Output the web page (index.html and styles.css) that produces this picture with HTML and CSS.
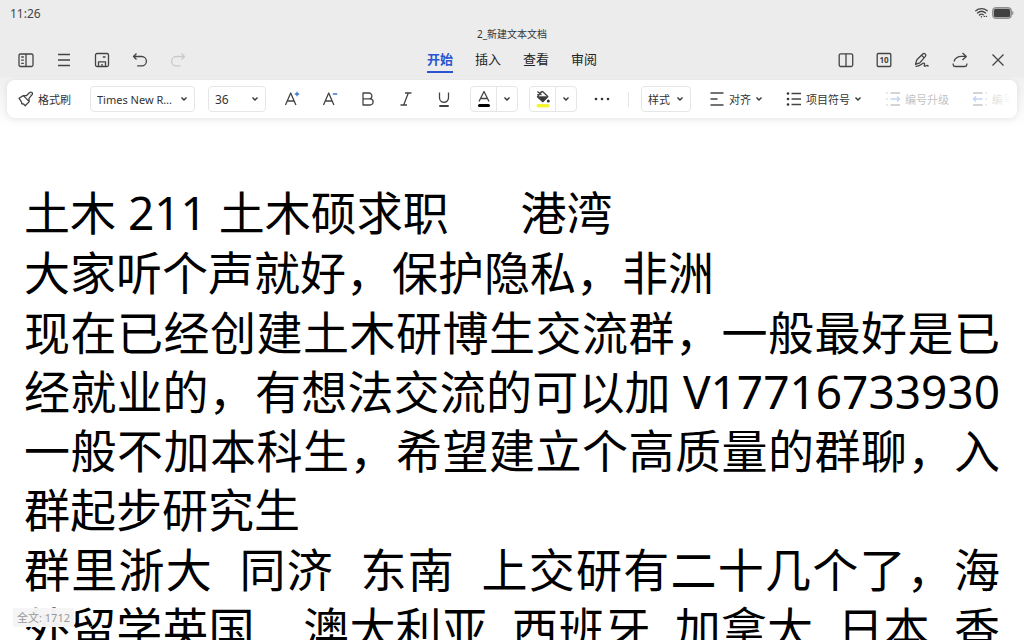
FILE: index.html
```html
<!DOCTYPE html>
<html lang="zh-CN">
<head>
<meta charset="utf-8">
<title>2_新建文本文档</title>
<link rel="stylesheet" href="styles.css">
</head>
<body>
<div class="app">
  <header class="header">
    <div class="status">
      <time>11:26</time>
      <div class="status-icons">
        <svg width="13" height="12" viewBox="0 0 13 12" fill="none" stroke="#444" stroke-width="1.3" stroke-linecap="round"><path d="M.8 3.8C4 .8 9 .8 12.2 3.8M2.5 6C5 3.8 8 3.8 10.5 6M4.4 8C5.6 7 7.2 7 8.2 7.8"/><path d="M6.4 9.6v.3M9.2 9.4h.2M11.3 9.4h.2"/></svg>
        <svg width="22" height="12" viewBox="0 0 22 12"><rect x=".6" y=".6" width="18.8" height="10.8" rx="3" fill="#aaa" stroke="#888"/><rect x="2" y="2" width="16" height="8" rx="1.5" fill="#404040"/><path d="M20.5 4v4c1.2-.5 1.2-3.500 0-4z" fill="#555"/></svg>
      </div>
    </div>
    <h1 class="title">2_新建文本文档</h1>
    <div class="appbar">
      <div class="actions">
        <button class="icon-btn" aria-label="目录"><svg viewBox="0 0 16 16"><rect x="1" y="2" width="14" height="12.500" rx="1.500"/><path d="M8 2v12.500M3.200 5h2.600M3.200 8.200h2.600M3.200 11.400h2.600"/></svg></button>
        <button class="icon-btn" aria-label="菜单"><svg viewBox="0 0 16 16"><path d="M2 2.500h12M2 8h12M2 13.500h12"/></svg></button>
        <button class="icon-btn" aria-label="保存"><svg viewBox="0 0 16 16"><rect x="1.500" y="1.500" width="13" height="13" rx="1.500"/><path d="M4.500 14.500V9.800h7v4.700M8.800 5h2.700M8 12v2.500"/></svg></button>
        <button class="icon-btn" aria-label="撤销"><svg viewBox="0 0 16 16"><path d="M4.500 1.500L1.500 4.500l3 3M1.500 4.500h8.200a4.700 4.700 0 0 1 0 9.400H5.200"/></svg></button>
        <button class="icon-btn" aria-label="重做" disabled><svg viewBox="0 0 16 16"><path d="M11.500 1.500l3 3-3 3M14.500 4.500H6.300a4.700 4.700 0 0 0 0 9.400h4.500"/></svg></button>
      </div>
      <nav class="tabs">
        <a class="tab tab-active" href="#start">开始</a>
        <a class="tab" href="#insert">插入</a>
        <a class="tab" href="#view">查看</a>
        <a class="tab" href="#review">审阅</a>
      </nav>
      <div class="actions actions-end">
        <button class="icon-btn" aria-label="分栏"><svg viewBox="0 0 16 16"><rect x="1.200" y="1.800" width="13.500" height="12.700" rx="1.500"/><path d="M8 1.800v12.700"/></svg></button>
        <button class="icon-btn" aria-label="文档数 10"><svg viewBox="0 0 16 16"><rect x="1.200" y="1.500" width="13.600" height="13" rx="1"/><text class="badge-num" x="8" y="11">10</text></svg></button>
        <button class="icon-btn" aria-label="批注"><svg viewBox="0 0 16 16"><path d="M1.500 12.300l1.400-4.500L8.700 2c1.700-1.500 4 .5 2.700 2.300L5.800 10.800zM7.600 3.300l2.600 2.600M1.500 14.300c5 .3 7-4.100 8.800-3 1.300.8-1 2.500.4 2.900 1.400.3 2.200-2 3.800.1"/></svg></button>
        <button class="icon-btn" aria-label="分享"><svg viewBox="0 0 16 16"><path d="M10.500 1l3.800 3.400-3.800 3.500M14 4.400H9.500C5.500 4.400 3 6.400 2 9.500M1.200 11.500v1.200c0 1 .8 1.800 1.800 1.800h10c1 0 1.800-.8 1.800-1.800v-1.200"/></svg></button>
        <button class="icon-btn" aria-label="关闭"><svg viewBox="0 0 16 16"><path d="M2.500 2.500l11 11M13.500 2.500l-11 11"/></svg></button>
      </div>
    </div>
  </header>

  <div class="toolbar-wrap">
    <div class="toolbar" role="toolbar" aria-label="格式">
      <button class="text-btn"><svg class="ico" viewBox="0 0 16 16"><path d="M1 7.200l4.300-2.600 3 .1 3.400-3.200c1.500-1.200 3.500.5 2.400 2.200L11 7.300l.2 3.300-4 4.200-2-2-1.500 0-.1-1.700zM5.300 4.600l6 6M12.300 3.500l.3.200"/></svg>格式刷</button>
      <label class="select-box font-name"><select aria-label="字体"><option>Times New R…</option></select><svg class="chev" viewBox="0 0 8 6"><path d="M1.500 1.500L4 4l2.500-2.500"/></svg></label>
      <label class="select-box font-size"><select aria-label="字号"><option>36</option></select><svg class="chev" viewBox="0 0 8 6"><path d="M1.500 1.500L4 4l2.500-2.500"/></svg></label>
      <div class="char-tools">
        <button class="char-btn" aria-label="增大字号"><svg class="ico" viewBox="0 0 16 16"><path d="M1.500 14L6.700 2l5.200 12M3.200 10h7"/><path class="blue" d="M13 .8v4.400M10.800 3h4.400"/></svg></button>
        <button class="char-btn" aria-label="减小字号"><svg class="ico" viewBox="0 0 16 16"><path d="M1.500 14L6.700 2l5.200 12M3.200 10h7"/><path class="blue" d="M10.800 3h4.400"/></svg></button>
        <button class="char-btn" aria-label="加粗"><svg class="ico" viewBox="0 0 16 16"><path d="M3 2h6a2.900 2.900 0 0 1 0 5.800H3zM3 7.800h7a3.100 3.100 0 0 1 0 6.200H3z"/></svg></button>
        <button class="char-btn" aria-label="斜体"><svg class="ico" viewBox="0 0 16 16"><path d="M7 2h6.500M2.500 14H9M10.300 2L5.700 14"/></svg></button>
        <button class="char-btn" aria-label="下划线"><svg class="ico" viewBox="0 0 16 16"><path d="M3.500 1.500v5.300a4.500 4.500 0 0 0 9 0V1.500"/><path class="black" d="M3.300 15h9.400"/></svg></button>
      </div>
      <div class="split">
        <button aria-label="字体颜色"><svg class="ico wide" viewBox="0 0 16 18"><path d="M3 11.500L8 1.500l5 10M4.500 8.500h7"/><rect x="2" y="14" width="12" height="3" rx="1.500" fill="#000" stroke="none"/></svg></button>
        <button aria-label="更多字体颜色"><svg class="chev" viewBox="0 0 8 6"><path d="M1.500 1.500L4 4l2.500-2.500"/></svg></button>
      </div>
      <div class="split">
        <button aria-label="突出显示"><svg class="ico wide" viewBox="0 0 16 18"><path d="M2.500 1.500l4 3.500M2.500 5L6 2M7.300 1.200l5.500 5.300-5 5-5.300-5 4.800-5.300"/><path d="M2.700 7h9.800l-4.700 4.500z" fill="#333"/><circle cx="13.300" cy="11" r="1.500" fill="#333" stroke="none"/><rect x="1.500" y="14" width="13" height="3.500" rx="1.700" fill="#f4f632" stroke="none"/></svg></button>
        <button aria-label="更多突出显示颜色"><svg class="chev" viewBox="0 0 8 6"><path d="M1.500 1.500L4 4l2.500-2.500"/></svg></button>
      </div>
      <button class="char-btn more" aria-label="更多"><svg class="ico" viewBox="0 0 16 16"><g fill="#333" stroke="none"><circle cx="2" cy="8" r="1.300"/><circle cx="8" cy="8" r="1.300"/><circle cx="14" cy="8" r="1.300"/></g></svg></button>
      <span class="divider"></span>
      <label class="select-box style-name"><select aria-label="样式"><option>样式</option></select><svg class="chev" viewBox="0 0 8 6"><path d="M1.500 1.500L4 4l2.500-2.500"/></svg></label>
      <button class="text-btn"><svg class="ico" viewBox="0 0 16 16"><path d="M1.500 2h13M1.500 8h7M1.500 14h13"/></svg>对齐<svg class="chev" viewBox="0 0 8 6"><path d="M1.500 1.500L4 4l2.500-2.500"/></svg></button>
      <button class="text-btn"><svg class="ico" viewBox="0 0 16 16"><path d="M5.500 2.500h9.500M5.500 8h9.500M5.500 13.500h9.500"/><g fill="#333" stroke="none"><circle cx="2" cy="2.500" r="1.300"/><circle cx="2" cy="8" r="1.300"/><circle cx="2" cy="13.500" r="1.300"/></g></svg>项目符号<svg class="chev" viewBox="0 0 8 6"><path d="M1.500 1.500L4 4l2.500-2.500"/></svg></button>
      <button class="text-btn" disabled><svg class="ico" viewBox="0 0 16 16"><path d="M5.500 2h9.500M5.500 14h9.500M1.500 2h1M1.500 8h1M1.500 14h1"/><path class="blue" d="M5.500 8h9M12 5.500L14.500 8 12 10.500"/></svg>编号升级</button>
      <button class="text-btn" disabled><svg class="ico" viewBox="0 0 16 16"><path d="M1 2h9.500M1 14h9.500M13.500 2h1M13.500 8h1M13.500 14h1"/><path class="blue" d="M1.500 8h9M4 5.500L1.500 8 4 10.500"/></svg>编号降级</button>
    </div>
  </div>

  <main class="document">
    <p>土木 211 土木硕求职      港湾</p>
    <p>大家听个声就好，保护隐私，非洲</p>
    <p>现在已经创建土木研博生交流群，一般最好是已经就业的，有想法交流的可以加 V17716733930 一般不加本科生，希望建立个高质量的群聊，入群起步研究生</p>
    <p class="full">群里浙大  同济  东南  上交研有二十几个了，海外留学英国    澳大利亚  西班牙  加拿大  日本  香</p>
  </main>
  <div class="word-count">全文: 1712</div>
</div>
</body>
</html>
```
FILE: styles.css
```css
* {
  box-sizing: border-box;
}

body {
  margin: 0;
  background: #fff;
  color: #333;
  font-family: "Noto Sans", "Noto Sans CJK SC", sans-serif;
  font-size: 11px;
}

button,
select {
  margin: 0;
  padding: 0;
  border: 0;
  background: none;
  color: inherit;
  font: inherit;
}

svg {
  display: block;
  flex: none;
}

.app {
  display: flex;
  flex-direction: column;
  position: relative;
  height: 100vh;
  overflow: hidden;
}

.header {
  flex: none;
  background: #ececec;
}

.status {
  display: flex;
  align-items: center;
  justify-content: space-between;
  height: 26px;
  padding: 0 10px;
  font-size: 12px;
  color: #444;
}

.status-icons {
  display: flex;
  align-items: center;
  gap: 4px;
}

.title {
  margin: 0;
  font-size: 10px;
  font-weight: 400;
  line-height: 16px;
  text-align: center;
}

.appbar {
  display: grid;
  grid-template-columns: 1fr auto 1fr;
  align-items: center;
  padding: 4px 18px;
}

.actions {
  display: flex;
  gap: 22px;
}

.actions-end {
  justify-content: flex-end;
}

.icon-btn svg,
.ico {
  width: 16px;
  height: 16px;
  fill: none;
  stroke: #444;
  stroke-width: 1.3;
  stroke-linejoin: round;
}

.ico.wide {
  height: 18px;
}

.icon-btn:disabled {
  opacity: 0.2;
}

.badge-num {
  fill: #444;
  stroke: none;
  font-size: 8px;
  font-weight: 700;
  text-anchor: middle;
}

.tabs {
  display: flex;
  gap: 22px;
}

.tab {
  padding-top: 2px;
  border-bottom: 2px solid transparent;
  color: #222;
  font-size: 13px;
  line-height: 23px;
  text-decoration: none;
}

.tab-active {
  border-color: #2b55d0;
  color: #2b55d0;
  font-weight: 700;
}

.toolbar-wrap {
  flex: none;
  padding: 3px 7px 10px;
  background: linear-gradient(#f0f0f0, #fff);
}

.toolbar {
  display: flex;
  align-items: center;
  height: 38px;
  padding-left: 11px;
  overflow: hidden;
  border-radius: 8px;
  background: #fff;
  box-shadow: 0 1px 6px rgba(0, 0, 0, 0.1);
  position: relative;
}

.toolbar::after {
  content: "";
  position: absolute;
  top: 0;
  right: 0;
  width: 36px;
  height: 100%;
  background: linear-gradient(to right, rgba(255, 255, 255, 0), #fff 85%);
}

.toolbar > * {
  flex: none;
}

.text-btn {
  display: flex;
  align-items: center;
  gap: 4px;
  white-space: nowrap;
}

.text-btn + .text-btn {
  margin-left: 23px;
}

.text-btn:disabled {
  opacity: 0.3;
}

.select-box {
  display: flex;
  align-items: center;
  height: 26px;
  padding: 0 6px;
  border: 1px solid #e6e6e6;
  border-radius: 4px;
}

.select-box select {
  flex: 1;
  min-width: 0;
  appearance: none;
}

.font-name {
  width: 105px;
  margin-left: 19px;
}

.font-size {
  width: 58px;
  margin-left: 13px;
}

.font-size select {
  font-size: 12px;
}

.style-name {
  width: 50px;
  margin: 0 18px 0 12px;
}

.chev {
  width: 8px;
  height: 6px;
  fill: none;
  stroke: #333;
  stroke-width: 1.4;
}

.char-tools {
  display: flex;
  margin: 0 7px;
}

.char-btn {
  display: flex;
  justify-content: center;
  width: 38px;
}

.blue {
  stroke: #3478d8;
}

.black {
  stroke: #000;
}

.split {
  display: flex;
  width: 48px;
  height: 26px;
  border: 1px solid #e6e6e6;
  border-radius: 4px;
}

.split + .split {
  margin-left: 11px;
}

.split button {
  display: flex;
  flex: 1;
  align-items: center;
  justify-content: center;
}

.split button:first-child {
  flex: none;
  width: 26px;
  border-right: 1px solid #e6e6e6;
}

.more {
  margin: 0 7px 0 6px;
}

.divider {
  width: 1px;
  height: 15px;
  background: #e6e6e6;
}

.document {
  flex: 1;
  min-height: 0;
  overflow: hidden;
  padding: 55px 24px 0;
  color: #000;
  font-size: 46px;
  line-height: 59px;
  text-align: justify;
}

.document p {
  margin: 0 0 1px;
  white-space: pre-wrap;
}

.document .full {
  text-align-last: justify;
}

.word-count {
  position: absolute;
  bottom: 13px;
  left: 13px;
  padding: 0 4px;
  background: rgba(245, 245, 245, 0.98);
  color: #999;
  font-size: 11px;
  line-height: 19px;
}
```
